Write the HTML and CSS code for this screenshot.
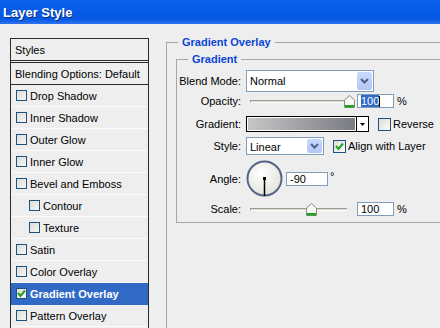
FILE: index.html
```html
<!DOCTYPE html>
<html lang="en">
  <head>
    <meta charset="UTF-8" />
    <title>Layer Style</title>
    <link rel="stylesheet" href="styles.css">
  </head>
  <body>
    <div class="titlebar">Layer Style</div>
    <div class="dialog">
      <ul class="styles">
        <li class="head">Styles</li>
        <li class="head blending">Blending Options: Default</li>
        <li><span class="box"></span>Drop Shadow</li>
        <li><span class="box"></span>Inner Shadow</li>
        <li><span class="box"></span>Outer Glow</li>
        <li><span class="box"></span>Inner Glow</li>
        <li><span class="box"></span>Bevel and Emboss</li>
        <li class="sub"><span class="box"></span>Contour</li>
        <li class="sub"><span class="box"></span>Texture</li>
        <li><span class="box"></span>Satin</li>
        <li><span class="box"></span>Color Overlay</li>
        <li class="on"><span class="box"><svg width="11" height="11" viewBox="0 0 11 11"><path d="M2 5 L4.5 8 L9 2.5" fill="none" stroke="#21a121" stroke-width="2"/></svg></span>Gradient Overlay</li>
        <li><span class="box"></span>Pattern Overlay</li>
      </ul>

      <fieldset class="group outer">
        <legend>Gradient Overlay</legend>
        <fieldset class="group inner">
          <legend>Gradient</legend>

          <div class="row r-blend">
            <label>Blend Mode:</label>
            <div class="combo blend-combo">
              <span class="value">Normal</span>
              <span class="drop"><svg width="15" height="18" viewBox="0 0 15 18"><path d="M4 7 L7.5 10.5 L11 7" fill="none" stroke="#4d6185" stroke-width="2"/></svg></span>
            </div>
          </div>

          <div class="row r-opacity">
            <label>Opacity:</label>
            <div class="slider">
              <div class="track"></div>
              <svg class="thumb" style="left: 98px" width="11" height="13" viewBox="0 0 11 13"><path d="M0.5 12.5 V5 L5.5 0.5 L10.5 5 V12.5 Z" fill="#f7f7f2" stroke="#8a8a80"/><rect x="1" y="10" width="9" height="2.5" fill="#21a121"/></svg>
            </div>
            <div class="field"><span class="sel">100</span><span class="caret"></span></div>
            <span class="unit">%</span>
          </div>

          <div class="row r-gradient">
            <label>Gradient:</label>
            <div class="swatch">
              <span class="ramp"></span>
              <span class="ramp-drop"><svg width="11" height="14" viewBox="0 0 11 14"><path d="M3 6 H8 L5.5 9 Z" fill="#000"/></svg></span>
            </div>
            <span class="check reverse"></span>
            <span class="check-label">Reverse</span>
          </div>

          <div class="row r-style">
            <label>Style:</label>
            <div class="combo style-combo">
              <span class="value">Linear</span>
              <span class="drop"><svg width="15" height="16" viewBox="0 0 15 16"><path d="M4 6 L7.5 9.5 L11 6" fill="none" stroke="#4d6185" stroke-width="2"/></svg></span>
            </div>
            <span class="check align"><svg width="11" height="11" viewBox="0 0 11 11"><path d="M2 5 L4.5 8 L9 2.5" fill="none" stroke="#21a121" stroke-width="2"/></svg></span>
            <span class="check-label">Align with Layer</span>
          </div>

          <div class="row r-angle">
            <label>Angle:</label>
            <svg class="dial" width="37" height="37" viewBox="0 0 37 37">
              <defs>
                <radialGradient id="dialFill" cx="0.4" cy="0.35" r="0.7">
                  <stop offset="0" stop-color="#ffffff"/>
                  <stop offset="1" stop-color="#e2e2dc"/>
                </radialGradient>
              </defs>
              <circle cx="18.5" cy="18.5" r="17" fill="url(#dialFill)" stroke="#56648a" stroke-width="2"/>
              <line x1="18.5" y1="18.5" x2="18.5" y2="36" stroke="#000" stroke-width="1.5"/>
              <rect x="17" y="17" width="3" height="3" fill="#000"/>
            </svg>
            <div class="field angle-field">-90</div>
            <span class="deg">°</span>
          </div>

          <div class="row r-scale">
            <label>Scale:</label>
            <div class="slider">
              <div class="track short"></div>
              <svg class="thumb" style="left: 60px" width="11" height="13" viewBox="0 0 11 13"><path d="M0.5 12.5 V5 L5.5 0.5 L10.5 5 V12.5 Z" fill="#f7f7f2" stroke="#8a8a80"/><rect x="1" y="10" width="9" height="2.5" fill="#21a121"/></svg>
            </div>
            <div class="field">100</div>
            <span class="unit">%</span>
          </div>
        </fieldset>
      </fieldset>
    </div>
  </body>
</html>
```

FILE: styles.css
```css
body {
  margin: 0;
  width: 440px;
  height: 328px;
  overflow: hidden;
  background-color: #eeeeee;
  font-family: "Liberation Sans", Arial, sans-serif;
  font-size: 11px;
  color: #000;
}
.titlebar {
  height: 24px;
  padding-left: 3px;
  line-height: 25px;
  font-size: 13px;
  font-weight: bold;
  color: #fff;
  text-shadow: 1px 1px 0 #0a2a8a;
  background: linear-gradient(to bottom, #0a60ea 0%, #0558e4 80%, #2f73ef 100%);
}
.dialog {
  display: flex;
  align-items: flex-start;
  gap: 17px;
  padding-left: 10px;
  height: 304px;
  overflow: hidden;
}

/* left list */
.styles {
  list-style: none;
  margin: 14px 0 0 0;
  padding: 0;
  width: 137px;
  height: 300px;
  flex-shrink: 0;
  border: 1px solid #2b2b2b;
  border-bottom: none;
}
.styles li {
  display: flex;
  align-items: center;
  height: 21px;
  border-bottom: 1px solid #fbfbfb;
  padding-left: 5px;
}
.styles .head {
  padding-left: 4px;
  border-bottom: 1px solid #2b2b2b;
}
.styles .blending {
  margin-top: 1px;
  border-top: 1px solid #2b2b2b;
}
.styles .sub {
  padding-left: 18px;
}
.styles .on {
  background-color: #316ac5;
  border-bottom-color: #316ac5;
  color: #fff;
  font-weight: bold;
}
.box {
  width: 9px;
  height: 9px;
  margin-right: 3px;
  border: 1px solid #1c5180;
  background: linear-gradient(135deg, #dedcd4, #f6f6f4);
  display: flex;
}
.box svg {
  margin: -1px;
}

/* group boxes */
.group {
  margin: 0;
  border: 1px solid #a8a8a2;
}
.group legend {
  padding: 0 4px;
  line-height: 13px;
  font-weight: bold;
  color: #0a46d6;
}
.outer {
  width: 320px;
  height: 320px;
  flex-shrink: 0;
  margin-top: 12px;
  padding: 0 0 0 9px;
}
.outer > legend {
  margin-left: 2px;
}
.inner {
  margin-top: 4px;
  padding: 4px 0 6px 0;
}
.inner > legend {
  margin-left: 11px;
}

/* rows */
.row {
  display: flex;
  align-items: center;
}
.row label {
  width: 64px;
  margin-right: 5px;
  text-align: right;
}
.r-blend { height: 22px; }
.r-opacity { height: 14px; margin-top: 2px; }
.r-gradient { height: 16px; margin-top: 8px; }
.r-style { height: 18px; margin-top: 5px; }
.r-angle { height: 37px; margin-top: 5px; }
.r-scale { height: 14px; margin-top: 5px; }

.combo {
  display: flex;
  align-items: stretch;
  box-sizing: border-box;
  height: 100%;
  border: 1px solid #7f9db9;
  background-color: #fff;
}
.combo .value {
  flex: 1;
  display: flex;
  align-items: center;
  padding-left: 3px;
}
.combo .drop {
  width: 15px;
  margin: 1px;
  display: flex;
  align-items: center;
  border-radius: 2px;
  background: linear-gradient(to bottom, #c9d9fd, #b3c7f5);
}
.blend-combo { width: 128px; }
.style-combo { width: 78px; }
.style-combo .value { padding-top: 2px; }

.slider {
  position: relative;
  width: 108px;
  height: 14px;
  margin-right: 3px;
}
.track {
  margin: 6px 4px 0 4px;
  height: 1px;
  border-top: 1px solid #9d9d94;
  border-bottom: 1px solid #fff;
  border-left: 1px solid #9d9d94;
  background-color: #d8d8d0;
}
.track.short {
  margin-right: 7px;
}
.thumb {
  position: absolute;
  top: 1px;
}

.field {
  box-sizing: border-box;
  width: 37px;
  height: 14px;
  padding-left: 3px;
  display: flex;
  align-items: center;
  border: 1px solid #7f9db9;
  background-color: #fff;
}
.field .sel {
  background-color: #316ac5;
  color: #fff;
  line-height: 12px;
}
.field .caret {
  width: 1px;
  height: 11px;
  background-color: #000;
}
.unit {
  margin-left: 3px;
}

.swatch {
  display: flex;
  box-sizing: border-box;
  width: 123px;
  height: 16px;
  border: 1px solid #000;
  background-color: #fff;
}
.ramp {
  flex: 1;
  margin: 1px;
  background: linear-gradient(to right, #c6c6c6, #7b7b84);
}
.ramp-drop {
  width: 11px;
  border-left: 1px solid #000;
  display: flex;
  align-items: center;
}

.check {
  box-sizing: border-box;
  width: 13px;
  height: 13px;
  margin-left: 9px;
  margin-right: 2px;
  border: 1px solid #1c5180;
  background: linear-gradient(135deg, #dedcd4, #fbfbf9);
  display: flex;
  align-items: center;
  justify-content: center;
}

.dial {
  flex-shrink: 0;
}
.angle-field {
  width: 42px;
  margin-left: 3px;
}
.deg {
  align-self: flex-start;
  margin-top: 10px;
  margin-left: 2px;
}
```
